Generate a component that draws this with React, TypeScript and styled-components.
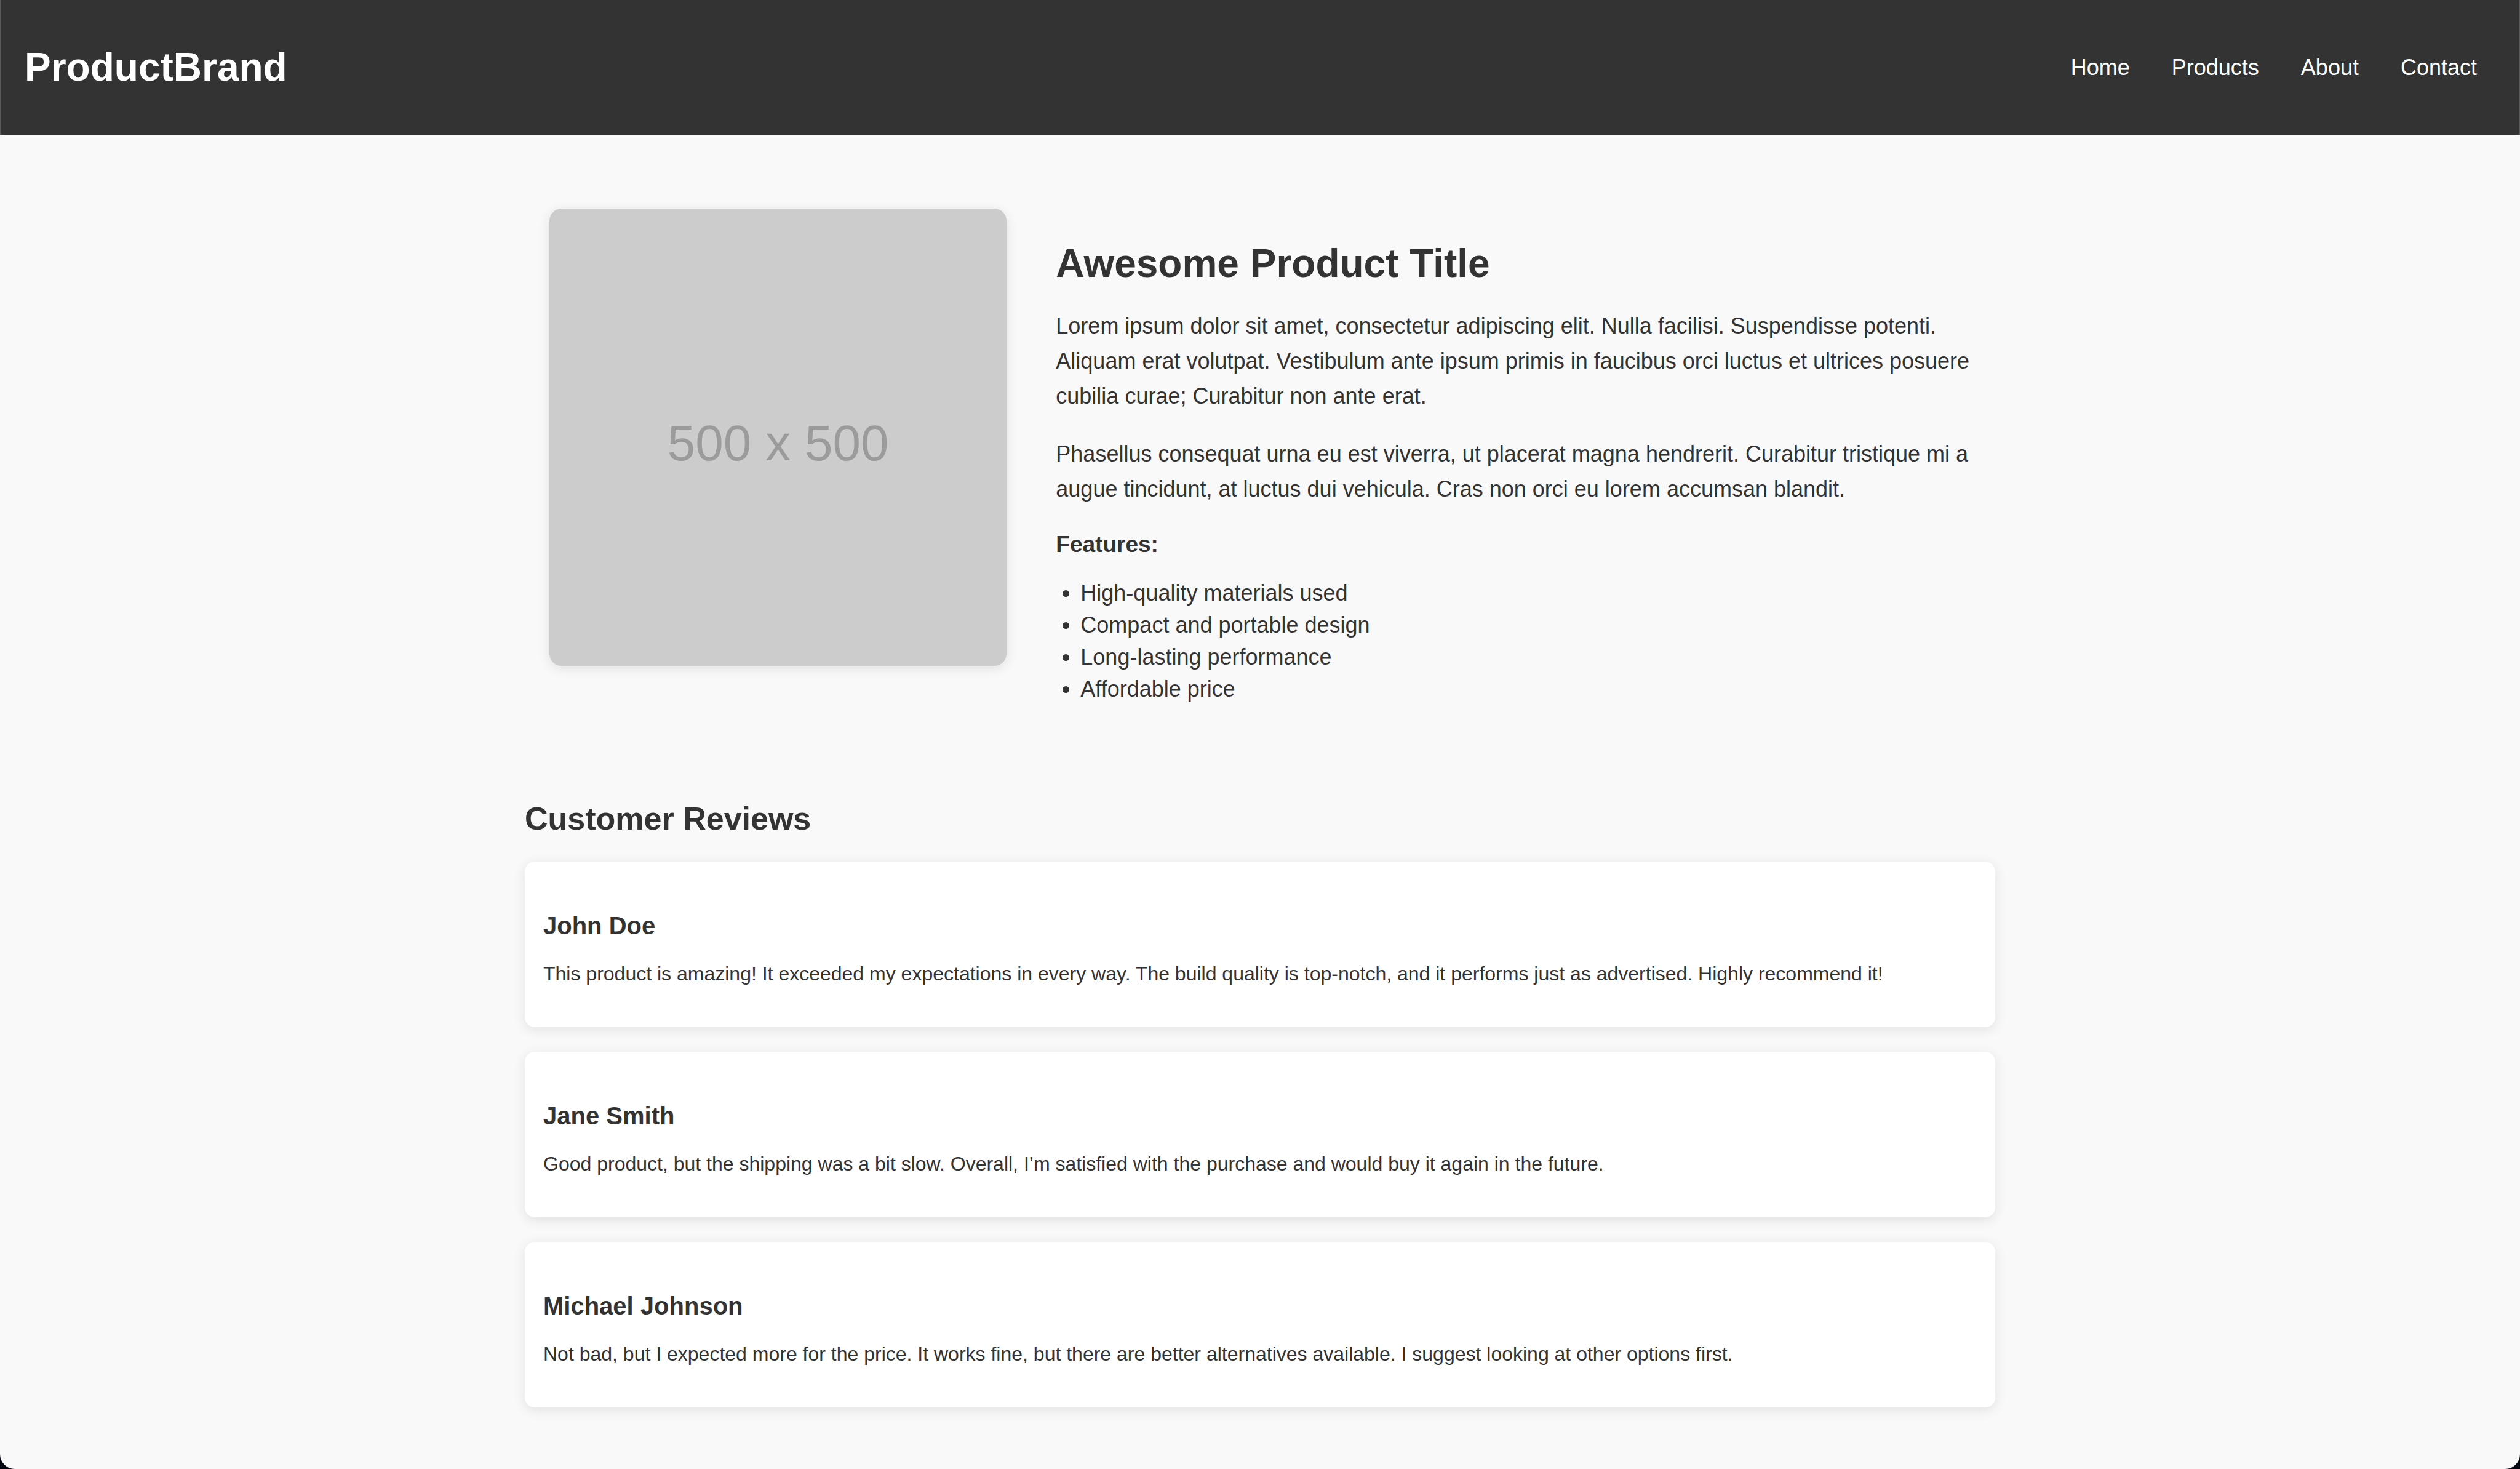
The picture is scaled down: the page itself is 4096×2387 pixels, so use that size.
import React from "react";
import styled, { createGlobalStyle } from "styled-components";

const GlobalStyle = createGlobalStyle`
  *, *::before, *::after {
    box-sizing: border-box;
  }

  body {
    margin: 0;
    background: #04060f;
    color: #333;
    font-family: "Liberation Sans", Arial, Helvetica, sans-serif;
  }

  h1, h2, h3, p, ul {
    margin: 0;
    padding: 0;
  }
`;

const Page = styled.div`
  min-height: 100vh;
  background: #f9f9f9;
  border-radius: 0 0 24px 24px;
`;

const Header = styled.header`
  display: flex;
  align-items: center;
  justify-content: space-between;
  padding: 72px 68px 72px 38px;
  border: solid #5a5a5a;
  border-width: 0 2px;
  background: #333;
  color: #fff;
`;

const Brand = styled.h1`
  font-size: 64px;
  line-height: 75px;
`;

const NavList = styled.ul`
  display: flex;
  gap: 68px;
  list-style: none;
`;

const NavLink = styled.a`
  display: block;
  color: #fff;
  font-size: 36px;
  line-height: 41px;
  text-decoration: none;
`;

const Container = styled.main`
  max-width: 2390px;
  margin: 0 auto;
  padding-bottom: 100px;
`;

const Product = styled.section`
  display: grid;
  grid-template-columns: 1fr 2fr;
  gap: 80px;
  align-items: start;
  padding: 120px 40px;
`;

const Photo = styled.svg`
  display: block;
  width: 100%;
  border-radius: 20px;
  background: #ccc;
  box-shadow: 0 4px 20px rgba(0, 0, 0, 0.1);
`;

const Details = styled.div`
  padding-top: 52px;
`;

const Title = styled.h2`
  margin-bottom: 35px;
  font-size: 64px;
  line-height: 75px;
`;

const Paragraph = styled.p`
  font-size: 36px;
  line-height: 57px;

  & + & {
    margin-top: 37px;
  }
`;

const FeaturesTitle = styled.h3`
  margin: 40px 0 31px;
  font-size: 37px;
  line-height: 44px;
`;

const FeatureList = styled.ul`
  padding-left: 40px;
  font-size: 36px;
  line-height: 52px;
`;

const Reviews = styled.section`
  display: flex;
  flex-direction: column;
  gap: 40px;
  padding-top: 34px;
`;

const ReviewsTitle = styled.h2`
  font-size: 52px;
  line-height: 60px;
`;

const ReviewCard = styled.article`
  padding: 81px 30px 61px;
  border-radius: 16px;
  background: #fff;
  box-shadow: 0 4px 20px rgba(0, 0, 0, 0.1);
`;

const Reviewer = styled.h3`
  margin-bottom: 30px;
  font-size: 40px;
  line-height: 46px;
`;

const ReviewText = styled.p`
  font-size: 32px;
  line-height: 51px;
`;

const links = ["Home", "Products", "About", "Contact"];

const features = [
  "High-quality materials used",
  "Compact and portable design",
  "Long-lasting performance",
  "Affordable price",
];

const reviews = [
  {
    name: "John Doe",
    text: "This product is amazing! It exceeded my expectations in every way. The build quality is top-notch, and it performs just as advertised. Highly recommend it!",
  },
  {
    name: "Jane Smith",
    text: "Good product, but the shipping was a bit slow. Overall, I’m satisfied with the purchase and would buy it again in the future.",
  },
  {
    name: "Michael Johnson",
    text: "Not bad, but I expected more for the price. It works fine, but there are better alternatives available. I suggest looking at other options first.",
  },
];

export default function App() {
  return (
    <>
      <GlobalStyle />
      <Page>
        <Header>
          <Brand>ProductBrand</Brand>
          <nav>
            <NavList>
              {links.map((label) => (
                <li key={label}>
                  <NavLink href={`#${label.toLowerCase()}`}>{label}</NavLink>
                </li>
              ))}
            </NavList>
          </nav>
        </Header>
        <Container>
          <Product>
            <Photo viewBox="0 0 744 744" role="img" aria-label="Product placeholder">
              <text x="372" y="409" textAnchor="middle" fontSize="82" fill="#9b9b9b">
                500 x 500
              </text>
            </Photo>
            <Details>
              <Title>Awesome Product Title</Title>
              <Paragraph>
                Lorem ipsum dolor sit amet, consectetur adipiscing elit. Nulla facilisi. Suspendisse
                potenti. Aliquam erat volutpat. Vestibulum ante ipsum primis in faucibus orci luctus
                et ultrices posuere cubilia curae; Curabitur non ante erat.
              </Paragraph>
              <Paragraph>
                Phasellus consequat urna eu est viverra, ut placerat magna hendrerit. Curabitur
                tristique mi a augue tincidunt, at luctus dui vehicula. Cras non orci eu lorem
                accumsan blandit.
              </Paragraph>
              <FeaturesTitle>Features:</FeaturesTitle>
              <FeatureList>
                {features.map((feature) => (
                  <li key={feature}>{feature}</li>
                ))}
              </FeatureList>
            </Details>
          </Product>
          <Reviews>
            <ReviewsTitle>Customer Reviews</ReviewsTitle>
            {reviews.map((review) => (
              <ReviewCard key={review.name}>
                <Reviewer>{review.name}</Reviewer>
                <ReviewText>{review.text}</ReviewText>
              </ReviewCard>
            ))}
          </Reviews>
        </Container>
      </Page>
    </>
  );
}
